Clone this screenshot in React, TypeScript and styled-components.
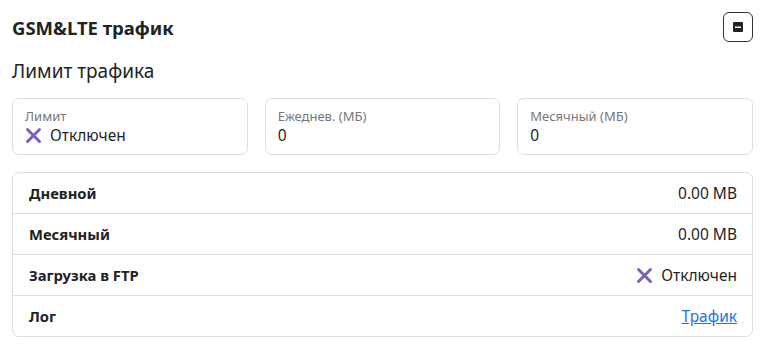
import styled, { createGlobalStyle } from "styled-components";

const Global = createGlobalStyle`
  body {
    margin: 0;
    background: #ffffff;
    font-family: "Noto Sans", "Open Sans", sans-serif;
    color: #1f1f1f;
  }
`

const Panel = styled.section`
  padding: 12px 11px 10px 12px;
`

const Header = styled.div`
  display: flex;
  justify-content: space-between;
  align-items: center;
  height: 30px;
`

const Title = styled.h2`
  margin: 0;
  font-size: 18.5px;
  font-weight: 700;
  color: #222;
`

const CollapseButton = styled.button`
  width: 30px;
  height: 30px;
  padding: 0;
  border: 1px solid #333;
  border-radius: 6px;
  background: #fff;
  display: flex;
  align-items: center;
  justify-content: center;
`

const Subtitle = styled.h3`
  margin: 16px 0 14px;
  font-size: 19px;
  font-weight: 400;
  color: #222;
`

const Cards = styled.div`
  display: grid;
  grid-template-columns: repeat(3, 1fr);
  gap: 17px;
`

const Card = styled.div`
  border: 1px solid #dedee3;
  border-radius: 7px;
  height: 57px;
  box-sizing: border-box;
  padding: 9px 12px 0;
`

const CardLabel = styled.div`
  font-size: 13px;
  color: #777;
  line-height: 16px;
`

const CardValue = styled.div`
  font-size: 15.5px;
  color: #1f1f1f;
  line-height: 22px;
  display: flex;
  align-items: center;
  gap: 8px;
`

const Table = styled.div`
  margin-top: 17px;
  border: 1px solid #dedee3;
  border-radius: 7px;
`

const Row = styled.div`
  display: flex;
  justify-content: space-between;
  align-items: center;
  height: 40px;
  padding: 0 15px 0 16px;
  & + & {
    border-top: 1px solid #dedee3;
  }
`

const RowLabel = styled.div`
  font-size: 14.8px;
  font-weight: 700;
  color: #222;
`

const RowValue = styled.div`
  font-size: 15.5px;
  color: #1f1f1f;
  display: flex;
  align-items: center;
  gap: 8px;
`

const Link = styled.a`
  font-size: 15.5px;
  color: #1a73e8;
  text-decoration: underline;
`

const Cross = () => (
  <svg width="17" height="17" viewBox="0 0 17 17">
    <path d="M2.5 2.5 L14.5 14.5 M14.5 2.5 L2.5 14.5" stroke="#7b5fbf" strokeWidth="3" strokeLinecap="round" />
  </svg>
)

const MinusBox = () => (
  <svg width="10" height="10" viewBox="0 0 10 10">
    <rect x="0" y="0" width="10" height="10" rx="1" fill="#222" />
    <rect x="2" y="4.5" width="6" height="1.5" fill="#fff" />
  </svg>
)

export default function App() {
  return (
    <>
      <Global />
      <Panel>
        <Header>
          <Title>GSM&amp;LTE трафик</Title>
          <CollapseButton><MinusBox /></CollapseButton>
        </Header>
        <Subtitle>Лимит трафика</Subtitle>
        <Cards>
          <Card>
            <CardLabel>Лимит</CardLabel>
            <CardValue><Cross />Отключен</CardValue>
          </Card>
          <Card>
            <CardLabel>Ежеднев. (МБ)</CardLabel>
            <CardValue>0</CardValue>
          </Card>
          <Card>
            <CardLabel>Месячный (МБ)</CardLabel>
            <CardValue>0</CardValue>
          </Card>
        </Cards>
        <Table>
          <Row>
            <RowLabel>Дневной</RowLabel>
            <RowValue>0.00 MB</RowValue>
          </Row>
          <Row>
            <RowLabel>Месячный</RowLabel>
            <RowValue>0.00 MB</RowValue>
          </Row>
          <Row>
            <RowLabel>Загрузка в FTP</RowLabel>
            <RowValue><Cross />Отключен</RowValue>
          </Row>
          <Row>
            <RowLabel>Лог</RowLabel>
            <Link href="#">Трафик</Link>
          </Row>
        </Table>
      </Panel>
    </>
  )
}
